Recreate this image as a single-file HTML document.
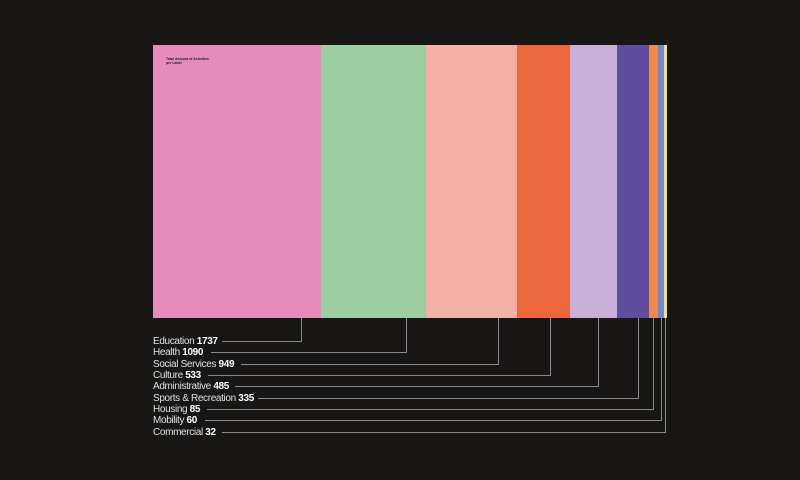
<!DOCTYPE html>
<html><head><style>
body{margin:0;width:800px;height:480px;background:#181716;position:relative;overflow:hidden;font-family:"Liberation Sans",sans-serif}
.s{position:absolute;top:45px;height:273px}
.t{position:absolute;left:153px;color:#e0e0e0;font-size:10px;line-height:11px;white-space:nowrap;letter-spacing:-0.35px}
.t b{color:#fff}
.h{position:absolute;height:1px;background:#8a8a8a}
.v{position:absolute;width:1px;background:#8a8a8a;top:318px}
</style></head><body>
<div class="s" style="left:153px;width:168px;background:#e68bba"></div>
<div class="s" style="left:321px;width:105px;background:#9ccea2"></div>
<div class="s" style="left:426px;width:91px;background:#f5b0a8"></div>
<div class="s" style="left:517px;width:53px;background:#ed673c"></div>
<div class="s" style="left:570px;width:47px;background:#c8b0d8"></div>
<div class="s" style="left:617px;width:32px;background:#5e4f9e"></div>
<div class="s" style="left:649px;width:9px;background:#f08a4a"></div>
<div class="s" style="left:658px;width:6px;background:#6f8ac8"></div>
<div class="s" style="left:664px;width:3px;background:#efe08a"></div>
<div style="position:absolute;left:166px;top:57px;font-size:3.5px;line-height:4px;color:#222;font-weight:bold">Total Amount of Activities<br>per Label</div>
<div class="t" style="top:336px">Education <b>1737</b></div>
<div class="t" style="top:347px">Health <b>1090</b></div>
<div class="t" style="top:359px">Social Services <b>949</b></div>
<div class="t" style="top:370px">Culture <b>533</b></div>
<div class="t" style="top:381px">Administrative <b>485</b></div>
<div class="t" style="top:393px">Sports &amp; Recreation <b>335</b></div>
<div class="t" style="top:404px">Housing <b>85</b></div>
<div class="t" style="top:415px">Mobility <b>60</b></div>
<div class="t" style="top:427px">Commercial <b>32</b></div>
<div class="h" style="top:341px;left:222px;width:80px"></div><div class="v" style="left:301px;height:23px"></div>
<div class="h" style="top:352px;left:211px;width:196px"></div><div class="v" style="left:406px;height:34px"></div>
<div class="h" style="top:364px;left:241px;width:258px"></div><div class="v" style="left:498px;height:46px"></div>
<div class="h" style="top:375px;left:208px;width:343px"></div><div class="v" style="left:550px;height:57px"></div>
<div class="h" style="top:386px;left:235px;width:364px"></div><div class="v" style="left:598px;height:68px"></div>
<div class="h" style="top:398px;left:258px;width:381px"></div><div class="v" style="left:638px;height:80px"></div>
<div class="h" style="top:409px;left:207px;width:447px"></div><div class="v" style="left:653px;height:91px"></div>
<div class="h" style="top:420px;left:205px;width:457px"></div><div class="v" style="left:661px;height:102px"></div>
<div class="h" style="top:432px;left:222px;width:444px"></div><div class="v" style="left:665px;height:114px"></div>
</body></html>
